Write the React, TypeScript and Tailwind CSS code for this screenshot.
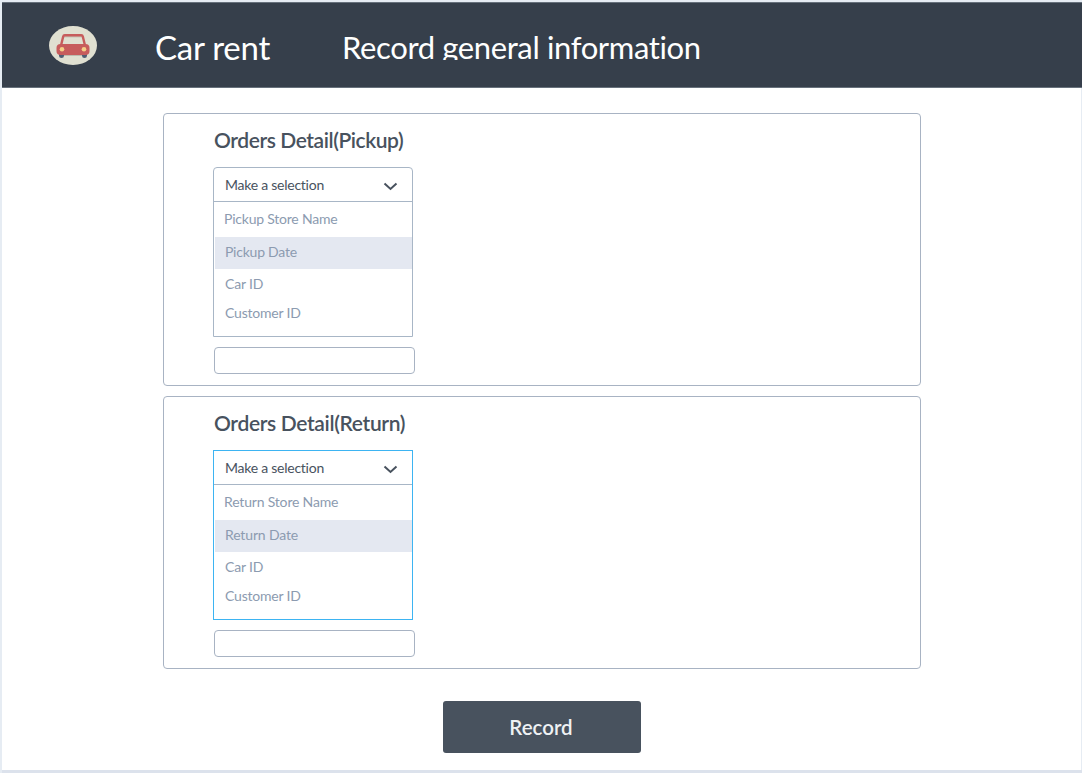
type PanelProps = {
  title: string;
  titleClass: string;
  options: { label: string; className: string }[];
  focused?: boolean;
};

function CarLogo() {
  return (
    <svg className="ml-[47px] mt-[23px] h-[39px] w-12 shrink-0" viewBox="0 0 48 39" aria-hidden="true">
      <ellipse cx="24" cy="19.5" rx="24" ry="19.5" fill="#e0e0d1" />
      <path d="M10 27h5v2.800a2.500 2.200 0 0 1-5 0zM33 27h5v2.800a2.500 2.200 0 0 1-5 0z" fill="#4f5d73" />
      <path d="M15 10.800h18M15 29.400h18" fill="none" stroke="#b8b8aa" strokeWidth="1" />
      <path d="M12 19.500l2.200-9q.3-1.200 1.500-1.200h16.600q1.200 0 1.500 1.200l2.200 9" fill="none" stroke="#c75c5c" strokeWidth="2.400" />
      <rect x="7.500" y="17.900" width="33" height="11" rx="4" fill="#c75c5c" />
      <circle cx="13" cy="23.300" r="2.300" fill="#f5cf87" />
      <circle cx="35" cy="23.300" r="2.300" fill="#f5cf87" />
    </svg>
  );
}

function OrderPanel({ title, titleClass, options, focused }: PanelProps) {
  return (
    <section className="h-[273px] w-[758px] rounded-[4px] border border-[#a8b3c3] pl-[49px] pt-3">
      <h2 className={`ml-px h-7 whitespace-nowrap text-[21px] font-semibold leading-7 text-[#48525e] ${titleClass}`}>
        {title}
      </h2>
      <div
        className={
          focused
            ? "mt-[13px] h-[170px] w-[200px] border border-[#3db4f2]"
            : "mt-[13px] h-[170px] w-[200px] rounded-t-[4px] border border-[#a8b6c6]"
        }
      >
        <div className="flex h-[34px] items-center justify-between border-b border-[#a8b6c6] pl-[11px] pr-[14px]">
          <span className="mb-px whitespace-nowrap text-[14px] tracking-[-0.250px] text-[#48525e]">Make a selection</span>
          <svg className="mt-1 h-[9px] w-[15px]" viewBox="0 0 15 9" fill="none" stroke="#48525e" strokeWidth="2" aria-hidden="true">
            <path d="M1.500 1.500l6 5.500 6-5.500" />
          </svg>
        </div>
        <ul className="whitespace-nowrap text-[14px] leading-5 text-[#8c9bb0]">
          <li className="h-[35px] pl-[10px] pt-[7px]">
            <span className={options[0].className}>{options[0].label}</span>
          </li>
          <li className="ml-px h-[32px] bg-[#e4e8f1] pl-[10px] pt-[5px]">
            <span className={options[1].className}>{options[1].label}</span>
          </li>
          <li className="h-[30px] pl-[11px] pt-[5px]">
            <span className={options[2].className}>{options[2].label}</span>
          </li>
          <li className="h-[28px] pl-[11px] pt-[4px]">
            <span className={options[3].className}>{options[3].label}</span>
          </li>
        </ul>
      </div>
      <input
        aria-label={title}
        className="ml-px mt-[10px] block h-[27px] w-[201px] rounded-[4px] border border-[#a8b3c3] bg-white px-2 text-[13px] outline-none"
      />
    </section>
  );
}

export default function App() {
  return (
    <div className="h-[773px] w-[1082px] overflow-hidden bg-[#e6ecf3] pl-[2px] pt-[2px] font-['Lato',sans-serif] [font-variant-ligatures:none]">
      <div className="h-[768px] w-[1079px] bg-white">
        <header className="flex h-[86px] w-[1080px] border-y border-[#67717c] bg-[#363f4b] text-white">
          <CarLogo />
          <span className="ml-[58px] mt-[24px] h-10 w-[187px] whitespace-nowrap text-[33px] leading-10 tracking-[-0.250px]">Car rent</span>
          <h1 className="mt-[24px] h-[33px] overflow-hidden whitespace-nowrap text-[31px] leading-10 tracking-[-0.370px]">
            Record general information
          </h1>
        </header>
        <main className="flex flex-col pl-[161px] pt-[25px]">
          <OrderPanel
            title="Orders Detail(Pickup)"
            titleClass="tracking-[-0.420px]"
            options={[
              { label: "Pickup Store Name", className: "tracking-[-0.220px]" },
              { label: "Pickup Date", className: "tracking-[-0.240px]" },
              { label: "Car ID", className: "tracking-[-0.150px]" },
              { label: "Customer ID", className: "tracking-[-0.200px]" },
            ]}
          />
          <div className="h-[10px]" />
          <OrderPanel
            title="Orders Detail(Return)"
            titleClass="tracking-[-0.340px]"
            focused
            options={[
              { label: "Return Store Name", className: "tracking-[-0.180px]" },
              { label: "Return Date", className: "tracking-[-0.150px]" },
              { label: "Car ID", className: "tracking-[-0.150px]" },
              { label: "Customer ID", className: "tracking-[-0.200px]" },
            ]}
          />
          <button className="ml-[280px] mt-8 h-[52px] w-[198px] rounded-[3px] bg-[#48525e] pr-0.5 text-[20.500px] font-semibold leading-7 text-[#eef1f4]">
            Record
          </button>
        </main>
      </div>
      <div className="h-[3px] bg-[#dce2ec]" />
    </div>
  );
}
